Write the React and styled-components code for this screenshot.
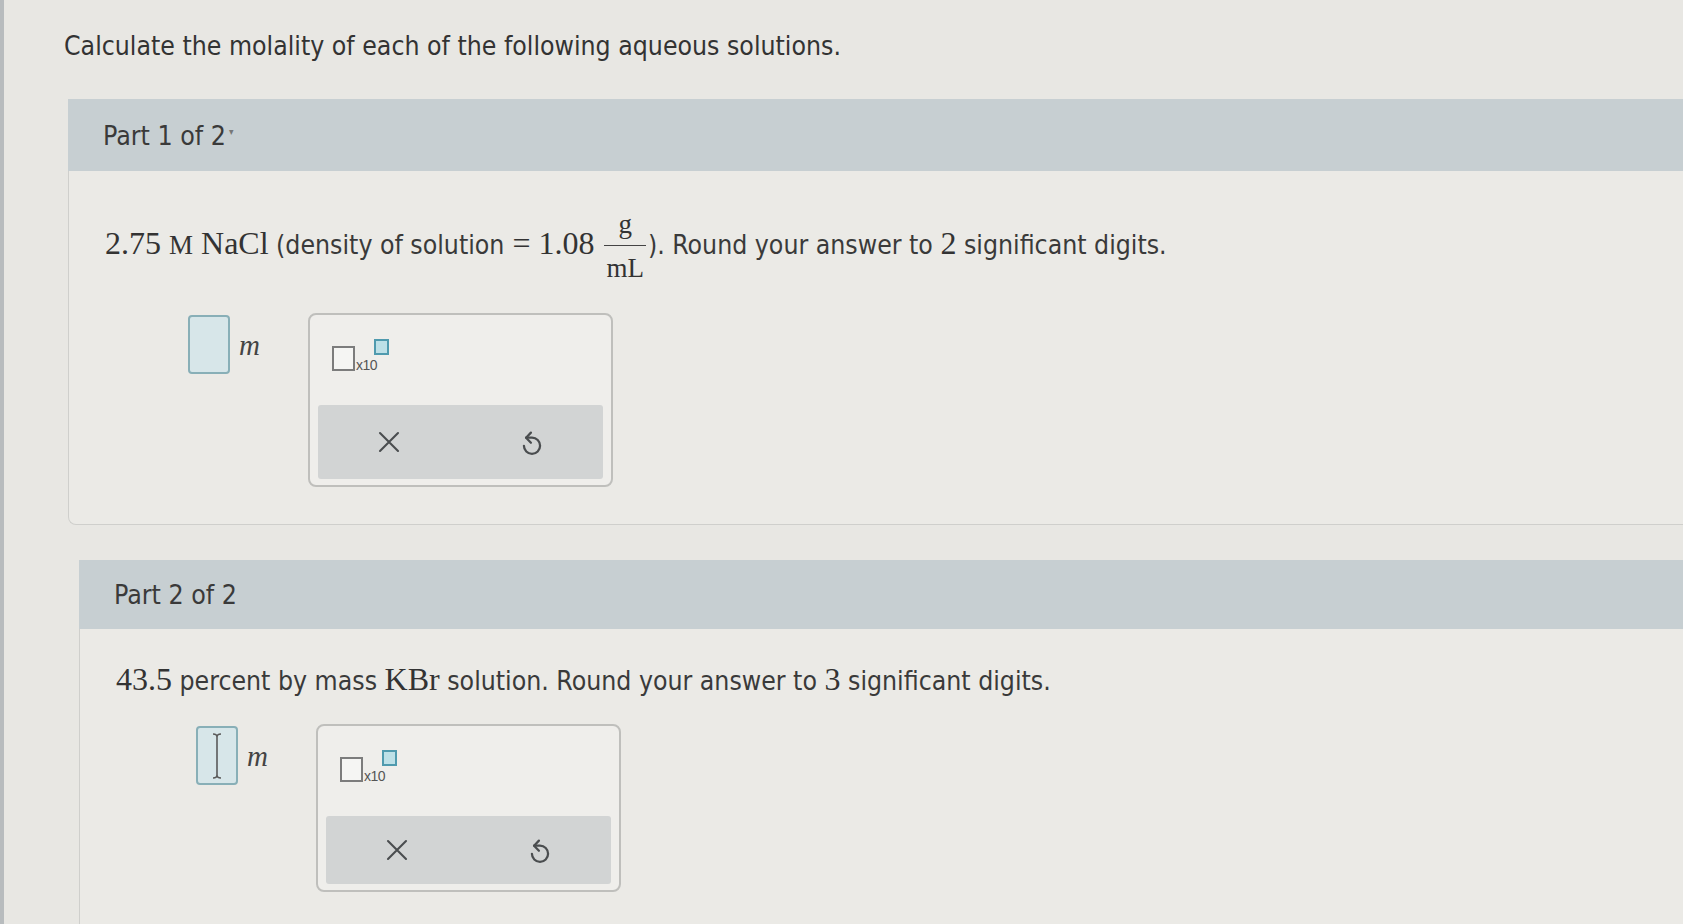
import styled, { createGlobalStyle } from 'styled-components';

const GlobalStyle = createGlobalStyle`
  html, body {
    margin: 0;
    padding: 0;
  }
  body {
    background: #e8e7e3;
    font-family: "DejaVu Sans Condensed", "Liberation Sans", Arial, sans-serif;
    color: #3a3a3a;
    overflow: hidden;
  }
`;

const Page = styled.main`
  min-height: 924px;
  padding-top: 29px;
  border-left: 4px solid #b8bcbe;
  box-sizing: border-box;
`;

const Title = styled.h1`
  margin: 0 0 0 60px;
  font-size: 26.4px;
  font-weight: normal;
  line-height: 34px;
  color: #333;
`;

const Section = styled.section`
  margin-left: ${p => p.$indent}px;
  margin-top: ${p => p.$top}px;
`;

const PartHeader = styled.div`
  height: ${p => p.$height}px;
  display: flex;
  align-items: center;
  padding-left: 35px;
  background: #c7cfd2;
  font-size: 26.5px;
  color: #3a3a3a;
`;

const Caret = styled.span`
  font-size: 10px;
  color: #777;
  margin-left: 3px;
  margin-top: -8px;
`;

const PartBody = styled.div`
  border-left: 1px solid #cfcfcc;
  border-bottom: ${p => (p.$open ? 'none' : '1px solid #cfcfcc')};
  border-radius: 0 0 0 8px;
  padding: ${p => p.$padTop}px 0 ${p => p.$padBottom}px 36px;
  background: #ebeae6;
`;

const Problem = styled.p`
  margin: 0 0 ${p => p.$gap}px 0;
  font-size: 26.4px;
  line-height: 34px;
`;

const Math = styled.span`
  font-family: "Liberation Serif", "Times New Roman", serif;
  font-size: ${p => p.$size || 32}px;
  color: #333;
`;

const Frac = styled.span`
  display: inline-flex;
  flex-direction: column;
  align-items: center;
  vertical-align: middle;
  margin: 0 2px 0 10px;
  font-family: "Liberation Serif", "Times New Roman", serif;
  font-size: 27px;
  line-height: 26px;
  color: #333;
`;

const Numer = styled.span`
  align-self: stretch;
  text-align: center;
  border-bottom: 1.5px solid #444;
  padding-bottom: 8px;
`;

const Denom = styled.span`
  padding: 9px 2px 0;
`;

const AnswerRow = styled.div`
  display: flex;
  align-items: flex-start;
  margin-left: ${p => p.$indent}px;
`;

const InputCell = styled.div`
  display: flex;
  align-items: center;
  margin-top: 2px;
  height: 59px;
`;

const InputBox = styled.div`
  width: 42px;
  height: 59px;
  box-sizing: border-box;
  border: 2px solid #88afb7;
  border-radius: 4px;
  background: #d7e6e9;
  display: flex;
  align-items: center;
  justify-content: center;
`;

const Unit = styled.span`
  font-family: "Liberation Serif", "Times New Roman", serif;
  font-style: italic;
  font-size: 29px;
  color: #444;
  margin-left: 9px;
  margin-top: 2px;
`;

const Tools = styled.div`
  width: 305px;
  height: ${p => p.$height}px;
  margin-left: 48px;
  box-sizing: border-box;
  border: 2px solid #bfbfbc;
  border-radius: 8px;
  background: #efeeeb;
  padding: 0 8px 6px;
  display: flex;
  flex-direction: column;
`;

const WidgetArea = styled.div`
  height: 90px;
  flex-shrink: 0;
  padding: 22px 0 0 14px;
  box-sizing: border-box;
`;

const Sci = styled.div`
  display: inline-flex;
  align-items: flex-end;
  height: 34px;
`;

const BigSquare = styled.span`
  width: 23px;
  height: 25px;
  box-sizing: border-box;
  border: 2px solid #7c7c7c;
  background: #f5f5f3;
`;

const Times = styled.span`
  font-family: "Liberation Sans", Arial, sans-serif;
  font-size: 14px;
  line-height: 12px;
  letter-spacing: -0.5px;
  color: #555;
  margin-left: 1px;
`;

const SupSquare = styled.span`
  align-self: flex-start;
  width: 15px;
  height: 16px;
  box-sizing: border-box;
  border: 2px solid #4f9aae;
  background: #bde0e7;
  margin: 2px 0 0 -3px;
`;

const Bar = styled.div`
  flex: 1;
  border-radius: 3px;
  background: #d2d4d4;
  display: grid;
  grid-template-columns: 1fr 1fr;
  align-items: center;
  justify-items: center;
`;

const IconButton = styled.button`
  border: none;
  background: none;
  padding: 0;
  display: flex;
  color: #4a4d4f;
`;

function CrossIcon() {
  return (
    <svg width="22" height="22" viewBox="0 0 22 22" fill="none" stroke="currentColor" strokeWidth="2.1" strokeLinecap="round">
      <path d="M2 2 L20 20 M20 2 L2 20" />
    </svg>
  );
}

function UndoIcon() {
  return (
    <svg width="22" height="28" viewBox="0 0 20 26" fill="none" stroke="currentColor" strokeWidth="2.1" strokeLinecap="round" strokeLinejoin="round">
      <path d="M2.5 16.5 A7.5 7.5 0 1 0 10 9 H4.5" />
      <path d="M9 4.3 L4.5 9 L9 13.7" />
    </svg>
  );
}

function TextCursor() {
  return (
    <svg width="14" height="48" viewBox="0 0 14 48" fill="none" stroke="#5a5a5a" strokeWidth="1.6">
      <path d="M3 2 Q7 2 7 5 Q7 2 11 2 M7 5 V43 M3 46 Q7 46 7 43 Q7 46 11 46" />
    </svg>
  );
}

function AnswerTools({ indent, cursor, height }) {
  return (
    <AnswerRow $indent={indent}>
      <InputCell>
        <InputBox>{cursor && <TextCursor />}</InputBox>
        <Unit>m</Unit>
      </InputCell>
      <Tools $height={height}>
        <WidgetArea>
          <Sci>
            <BigSquare />
            <Times>x10</Times>
            <SupSquare />
          </Sci>
        </WidgetArea>
        <Bar>
          <IconButton aria-label="Clear"><CrossIcon /></IconButton>
          <IconButton aria-label="Undo"><UndoIcon /></IconButton>
        </Bar>
      </Tools>
    </AnswerRow>
  );
}

export default function App() {
  return (
    <>
      <GlobalStyle />
      <Page>
        <Title>Calculate the molality of each of the following aqueous solutions.</Title>

        <Section $indent={64} $top={36}>
          <PartHeader $height={72}>
            Part 1 of 2<Caret>▾</Caret>
          </PartHeader>
          <PartBody $padTop={40} $padBottom={37}>
            <Problem $gap={32}>
              <Math>2.75 </Math><Math $size={27}>M</Math><Math> NaCl</Math> (density of solution
              <Math> = 1.08</Math>
              <Frac>
                <Numer>g</Numer>
                <Denom>mL</Denom>
              </Frac>
              ). Round your answer to <Math>2</Math> significant digits.
            </Problem>
            <AnswerTools indent={83} height={174} />
          </PartBody>
        </Section>

        <Section $indent={75} $top={35}>
          <PartHeader $height={69}>Part 2 of 2</PartHeader>
          <PartBody $open $padTop={33} $padBottom={40}>
            <Problem $gap={26}>
              <Math>43.5</Math> percent by mass <Math>KBr</Math> solution. Round your answer to <Math>3</Math> significant digits.
            </Problem>
            <AnswerTools indent={80} height={168} cursor />
          </PartBody>
        </Section>
      </Page>
    </>
  );
}
